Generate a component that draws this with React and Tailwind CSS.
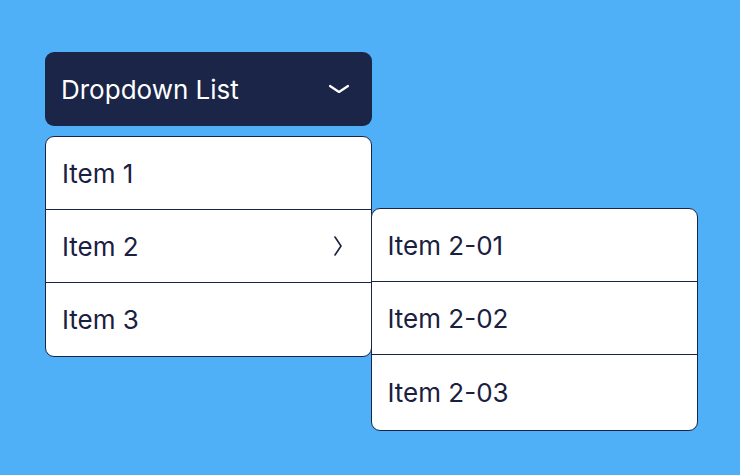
const Row = ({ children, last, right, tall }) => (
  <div
    className={`${tall ? "h-[75px]" : "h-[73px]"} flex items-center justify-between pl-4 pr-7 ${
      last ? "" : "border-b-[1.5px] border-[#1a2446]"
    }`}
  >
    <span>{children}</span>
    {right}
  </div>
);

export default function App() {
  return (
    <div
      className="w-[740px] h-[475px] bg-[#4fb0f8] pt-[52px] pl-[45px] text-[#1a2040] text-[26px]"
      style={{ fontFamily: "Inter, 'Noto Sans', sans-serif" }}
    >
      <div className="w-[327px] h-[74px] rounded-[9px] bg-[#1a2548] flex items-center justify-between pl-4 pr-[22px] text-white">
        <span>Dropdown List</span>
        <svg width="22" height="12" viewBox="0 0 22 12" fill="none">
          <path d="M2 3 L11 9 L20 3" stroke="white" strokeWidth="2.2" strokeLinecap="round" strokeLinejoin="round" />
        </svg>
      </div>
      <div className="flex items-start mt-[10px]">
        <div className="w-[327px] bg-white rounded-[9px] border-[1.5px] border-[#1a2446] overflow-hidden">
          <Row>Item 1</Row>
          <Row
            right={
              <svg width="10" height="22" viewBox="0 0 10 22" fill="none">
                <path d="M2 2 L8 11 L2 20" stroke="#1a2040" strokeWidth="1.6" strokeLinecap="round" strokeLinejoin="round" />
              </svg>
            }
          >
            Item 2
          </Row>
          <Row last>Item 3</Row>
        </div>
        <div className="w-[327px] -ml-[1.5px] mt-[72px] bg-white rounded-[9px] border-[1.5px] border-[#1a2446] overflow-hidden">
          <Row>Item 2-01</Row>
          <Row>Item 2-02</Row>
          <Row last tall>Item 2-03</Row>
        </div>
      </div>
    </div>
  );
}
